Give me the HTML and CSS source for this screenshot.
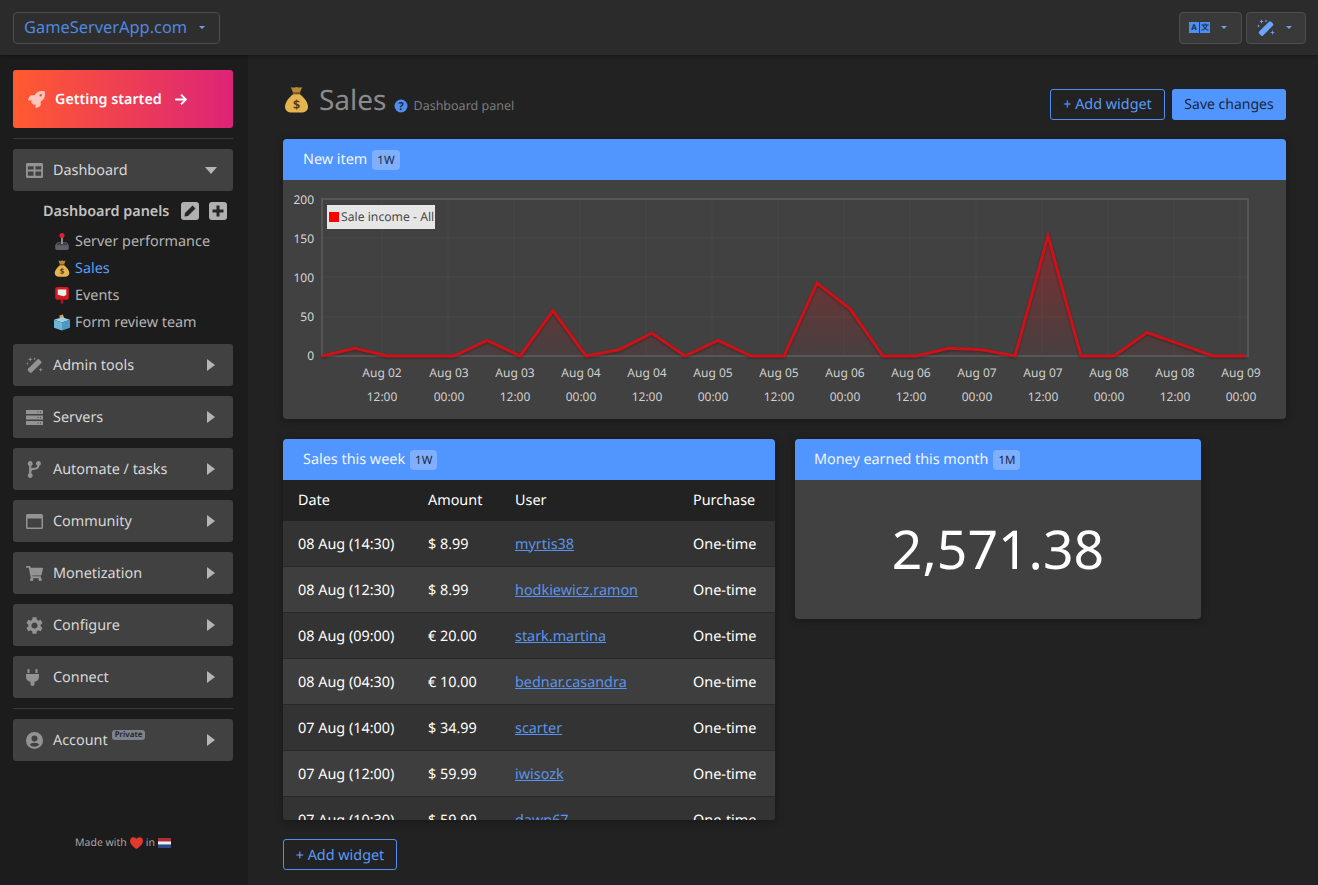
FILE: index.html
```html
<!DOCTYPE html>
<html lang="en">
<head>
<meta charset="utf-8">
<title>Sales</title>
<link rel="stylesheet" href="styles.css">
</head>
<body>
<svg class="defs" aria-hidden="true">
  <symbol id="i-rocket" viewBox="0 0 512 512"><path d="M505.12 19.09c-1.19-5.53-6.66-11-12.21-12.19C460.72 0 435.51 0 410.41 0 307.18 0 245.27 55.2 199.05 128H94.84c-16.35.02-35.56 11.88-42.89 26.48L2.52 253.3A28.4 28.4 0 0 0 0 264a24 24 0 0 0 24 24h103.81l-22.47 22.47c-11.37 11.36-13 32.26 0 45.25l50.9 50.9c11.16 11.19 32.16 13.16 45.28 0L224 384.16V488a24 24 0 0 0 24 24 28.56 28.56 0 0 0 10.71-2.52l98.73-49.39c14.63-7.3 26.51-26.5 26.51-42.86V312.8c72.6-46.31 128.03-108.41 128.03-211.1.1-25.2.1-50.4-6.86-82.61ZM384.04 168a40 40 0 1 1 40-40 40 40 0 0 1-40 40Z"/></symbol>
  <symbol id="i-table" viewBox="0 0 18 16"><path fill-rule="evenodd" d="M1.5 0h15A1.5 1.5 0 0 1 18 1.5v13a1.5 1.5 0 0 1-1.5 1.5h-15A1.5 1.5 0 0 1 0 14.500v-13A1.500 1.500 0 0 1 1.500 0ZM2 3.500V7h6V3.500Zm8 0V7h6V3.500ZM2 9v4.500h6V9Zm8 0v4.500h6V9Z"/></symbol>
  <symbol id="i-wand" viewBox="0 0 18 18"><path d="M12 2.700a1.500 1.500 0 0 1 2.100 0l1.800 1.800a1.500 1.500 0 0 1 0 2.100l-9.800 9.800a1.500 1.500 0 0 1-2.100 0L2.200 14.600a1.500 1.500 0 0 1 0-2.100Z"/><path fill="currentColor" d="M4.500 0l.6 1.900L7 2.500l-1.900.6L4.500 5l-.6-1.900L2 2.500l1.900-.6ZM1.500 5.500l.4 1.100L3 7l-1.100.4L1.500 8.500l-.4-1.100L0 7l1.100-.4ZM15.500 11l.6 1.900 1.900.6-1.900.6-.6 1.900-.6-1.900-1.900-.6 1.900-.6ZM9 .5l.4 1.100 1.100.4-1.100.4L9 3.500l-.4-1.100L7.500 2l1.100-.4Z"/></symbol>
  <symbol id="i-servers" viewBox="0 0 17 15"><path fill-rule="evenodd" d="M0 0h17v4H0Zm11.500 1.500v1h1v-1Zm2.500 0v1h1v-1ZM0 5.500h17v4H0ZM11.500 7v1h1V7ZM14 7v1h1V7ZM0 11h17v4H0Zm11.500 1.500v1h1v-1Zm2.500 0v1h1v-1Z"/></symbol>
  <symbol id="i-branch" viewBox="0 0 12 15"><path fill-rule="evenodd" d="M2.200 0a2.200 2.200 0 0 1 1 4.150v2.300c.7-.4 1.600-.6 2.600-.6 1.800 0 2.500-.6 2.700-1.650a2.200 2.200 0 1 1 1.800.05C10.100 6.500 8.400 7.700 5.800 7.700c-1.500 0-2.400.6-2.600 1.800v1.350a2.200 2.200 0 1 1-2 0v-6.700A2.200 2.200 0 0 1 2.200 0Z"/></symbol>
  <symbol id="i-window" viewBox="0 0 17 15"><path fill-rule="evenodd" d="M1.500 0h14A1.500 1.500 0 0 1 17 1.500v12a1.500 1.500 0 0 1-1.500 1.500h-14A1.500 1.500 0 0 1 0 13.500v-12A1.500 1.500 0 0 1 1.500 0ZM1.500 4.500v9h14v-9Z"/></symbol>
  <symbol id="i-cart" viewBox="0 0 576 512"><path d="M528.120 301.319l47.273-208C578.806 78.301 567.391 64 551.990 64H159.208l-9.166-44.810C147.758 8.021 137.930 0 126.529 0H24C10.745 0 0 10.745 0 24v16c0 13.255 10.745 24 24 24h69.883l70.248 343.435C147.325 417.100 136 435.222 136 456c0 30.928 25.072 56 56 56s56-25.072 56-56c0-15.674-6.447-29.835-16.824-40h209.647C430.447 426.165 424 440.326 424 456c0 30.928 25.072 56 56 56s56-25.072 56-56c0-22.172-12.888-41.332-31.579-50.405l5.517-24.276c3.413-15.018-8.002-29.319-23.403-29.319H218.117l-6.545-32h293.145c11.206 0 20.920-7.754 23.403-18.681z"/></symbol>
  <symbol id="i-cog" viewBox="2 2 20 20"><path d="M19.140 12.940c.04-.3.06-.61.06-.94 0-.32-.02-.64-.07-.94l2.030-1.580c.18-.14.23-.41.12-.61l-1.920-3.320c-.12-.22-.37-.29-.59-.22l-2.390.96c-.5-.38-1.030-.7-1.620-.94l-.36-2.540c-.04-.24-.24-.41-.48-.41h-3.840c-.24 0-.43.17-.47.41l-.36 2.540c-.59.24-1.130.57-1.620.94l-2.390-.96c-.22-.08-.47 0-.59.22L2.740 8.870c-.12.21-.08.47.12.61l2.030 1.580c-.05.3-.09.63-.09.94s.02.64.07.94l-2.030 1.580c-.18.14-.23.41-.12.61l1.920 3.320c.12.22.37.29.59.22l2.390-.96c.5.38 1.030.7 1.620.94l.36 2.540c.05.24.24.41.48.41h3.840c.24 0 .44-.17.47-.41l.36-2.540c.59-.24 1.130-.56 1.620-.94l2.390.96c.22.08.47 0 .59-.22l1.920-3.320c.12-.22.07-.47-.12-.61l-2.010-1.580zM12 15.600c-1.980 0-3.600-1.620-3.600-3.600s1.620-3.600 3.600-3.600 3.600 1.620 3.600 3.600-1.620 3.600-3.600 3.600z"/></symbol>
  <symbol id="i-plug" viewBox="0 0 17 17"><path d="M2.500 0a1 1 0 0 1 1 1v3h-2V1a1 1 0 0 1 1-1Zm8 0a1 1 0 0 1 1 1v3h-2V1a1 1 0 0 1 1-1ZM0 5h13v2.500a5.500 5.500 0 0 1-4.500 5.300V15a2 2 0 0 1-4 0v-2.200A5.500 5.500 0 0 1 0 7.500Z"/></symbol>
  <symbol id="i-user" viewBox="0 0 17 17"><path fill-rule="evenodd" d="M8.500 0a8.500 8.500 0 1 1 0 17 8.500 8.500 0 0 1 0-17Zm0 3.400a3 3 0 1 0 0 6 3 3 0 0 0 0-6Zm0 7.400c-2.300 0-4.100.8-4.700 2a6.500 6.500 0 0 0 9.400 0c-.6-1.200-2.400-2-4.700-2Z"/></symbol>
  <symbol id="e-bag" viewBox="0 0 24 28">
    <path fill="#b98a35" d="M6 1c2 1 4 .5 6 0 2 .5 4 1 6 0l-2.500 6h-7Z"/>
    <path fill="#7e5a20" d="M8 6.500h8v2H8Z"/>
    <path fill="#e3b450" d="M8.500 8.500h7C20 12 24 17 24 21.500c0 4-3 6-7 6H7c-4 0-7-2-7-6C0 17 4 12 8.500 8.500Z"/>
    <text x="12" y="23.500" class="e-dollar" text-anchor="middle">$</text>
  </symbol>
  <symbol id="e-joy" viewBox="0 0 16 20">
    <path fill="#5c6068" d="M0 14.500 2.500 11h11l2.500 3.500V18a2 2 0 0 1-2 2H2a2 2 0 0 1-2-2Z"/>
    <path fill="#3d4047" d="M3 11.500h10l1.500 3h-13Z"/>
    <rect x="7" y="4" width="2" height="9" fill="#9a9ea6"/>
    <circle cx="8" cy="3" r="3" fill="#d8222a"/>
    <rect x="3" y="15.500" width="2.500" height="1.500" fill="#c5303c"/>
  </symbol>
  <symbol id="e-mail" viewBox="0 0 16 20">
    <rect width="16" height="15" rx="2.500" fill="#cf1d26"/>
    <rect x="6.500" y="14" width="3" height="5.500" fill="#a8151d"/>
    <path fill="#f1eeea" d="M3 3h10v6.500l-3 1.500-7-2Z"/>
  </symbol>
  <symbol id="e-box" viewBox="0 0 18 18">
    <path fill="#d9a05a" d="M6 1l4-1 2 5-5 2Z"/>
    <path fill="#9bd3ea" d="M0 6l9-3 9 3-9 3Z"/>
    <path fill="#6eb5d6" d="M0 6l9 3v9l-9-3Z"/>
    <path fill="#4d9ac2" d="M18 6l-9 3v9l9-3Z"/>
  </symbol>
  <symbol id="e-heart" viewBox="0 0 14 13"><path fill="#e03a2c" d="M7 13C2 9.500 0 7 0 4a3.800 3.800 0 0 1 7-2 3.800 3.800 0 0 1 7 2c0 3-2 5.500-7 9Z"/></symbol>
  <symbol id="e-flag" viewBox="0 0 13 10"><rect width="13" height="3.400" y="0" fill="#b3283a"/><rect width="13" height="3.300" y="3.400" fill="#eee"/><rect width="13" height="3.300" y="6.700" fill="#2a4a8a"/></symbol>
</svg>

<header class="topbar">
  <button class="drop drop-brand">GameServerApp.com<span class="caret"></span></button>
  <div class="top-actions">
    <button class="drop drop-lang">
      <span class="lang-icon"><span class="lang-a">A</span><span class="lang-b">文</span></span><span class="caret"></span>
    </button>
    <button class="drop drop-wand"><svg class="wand-icon"><use href="#i-wand"/></svg><span class="caret"></span></button>
  </div>
</header>

<div class="shell">
  <aside class="sidebar">
    <a class="start">
      <svg class="start-rocket"><use href="#i-rocket"/></svg>
      <span>Getting started</span>
      <svg class="start-arrow" viewBox="0 0 12 12"><path d="M1 6h10M6.500 1.500 11 6l-4.500 4.500"/></svg>
    </a>
    <hr class="rule">
    <div class="nav-item">
      <svg class="nav-icon"><use href="#i-table"/></svg><span class="nav-label">Dashboard</span><span class="tri-down"></span>
    </div>
    <div class="subnav">
      <div class="sub-title">
        <span>Dashboard panels</span>
        <span class="sq"><svg viewBox="0 0 12 12"><path d="M8.500 .5 11.500 3.500 4 11 .5 11.500 1 8Z"/></svg></span>
        <span class="sq"><svg viewBox="0 0 12 12"><path d="M4.500 .5h3v4h4v3h-4v4h-3v-4h-4v-3h4Z"/></svg></span>
      </div>
      <div class="sub-link"><svg class="emoji"><use href="#e-joy"/></svg>Server performance</div>
      <div class="sub-link active"><svg class="emoji"><use href="#e-bag"/></svg>Sales</div>
      <div class="sub-link"><svg class="emoji"><use href="#e-mail"/></svg>Events</div>
      <div class="sub-link"><svg class="emoji"><use href="#e-box"/></svg>Form review team</div>
    </div>
    <div class="nav-item"><svg class="nav-icon"><use href="#i-wand"/></svg><span class="nav-label">Admin tools</span><span class="tri-right"></span></div>
    <div class="nav-item"><svg class="nav-icon"><use href="#i-servers"/></svg><span class="nav-label">Servers</span><span class="tri-right"></span></div>
    <div class="nav-item"><svg class="nav-icon"><use href="#i-branch"/></svg><span class="nav-label">Automate / tasks</span><span class="tri-right"></span></div>
    <div class="nav-item"><svg class="nav-icon"><use href="#i-window"/></svg><span class="nav-label">Community</span><span class="tri-right"></span></div>
    <div class="nav-item"><svg class="nav-icon"><use href="#i-cart"/></svg><span class="nav-label">Monetization</span><span class="tri-right"></span></div>
    <div class="nav-item"><svg class="nav-icon"><use href="#i-cog"/></svg><span class="nav-label">Configure</span><span class="tri-right"></span></div>
    <div class="nav-item"><svg class="nav-icon"><use href="#i-plug"/></svg><span class="nav-label">Connect</span><span class="tri-right"></span></div>
    <hr class="rule rule-low">
    <div class="nav-item"><svg class="nav-icon"><use href="#i-user"/></svg><span class="nav-label">Account<sup class="private">Private</sup></span><span class="tri-right"></span></div>
    <div class="made">Made with <svg class="mini"><use href="#e-heart"/></svg> in <svg class="mini"><use href="#e-flag"/></svg></div>
  </aside>

  <main class="main">
    <div class="page-head">
      <div class="page-title">
        <svg class="title-emoji"><use href="#e-bag"/></svg>
        <h1>Sales</h1>
        <svg class="help" viewBox="0 0 14 14"><circle cx="7" cy="7" r="6.500"/><text x="7" y="11" text-anchor="middle">?</text></svg>
        <span class="page-sub">Dashboard panel</span>
      </div>
      <div class="page-actions">
        <button class="btn-outline">+ Add widget</button>
        <button class="btn-solid">Save changes</button>
      </div>
    </div>

    <section class="card">
      <div class="card-head">New item <span class="tag">1W</span></div>
      <svg class="chart" viewBox="0 0 1003 239">
        <defs>
          <linearGradient id="fade" gradientUnits="userSpaceOnUse" x1="0" y1="19" x2="0" y2="176">
            <stop offset="0" stop-color="#e01018" stop-opacity=".5"/>
            <stop offset="1" stop-color="#e01018" stop-opacity=".04"/>
          </linearGradient>
        </defs>
        <g class="grid">
          <path d="M39 58H965M39 97H965M39 137H965M99 19V176M165 19V176M231 19V176M297 19V176M363 19V176M429 19V176M495 19V176M561 19V176M627 19V176M693 19V176M759 19V176M825 19V176M891 19V176M957 19V176"/>
        </g>
        <rect class="frame" x="39" y="19" width="926" height="157"/>
        <path class="area" d="M39 176 72 168.200 105 176 138 176 171 176 204 160.300 237 176 270 130.500 303 176 336 169.700 369 153.200 402 176 435 160.300 468 176 501 176 534 103 567 128.900 600 176 633 176 666 168.200 699 169.700 732 176 765 55.900 798 176 831 176 864 152.500 897 164.200 930 176 963 176Z"/>
        <path class="line" d="M39 176 72 168.200 105 176 138 176 171 176 204 160.300 237 176 270 130.500 303 176 336 169.700 369 153.200 402 176 435 160.300 468 176 501 176 534 103 567 128.900 600 176 633 176 666 168.200 699 169.700 732 176 765 55.900 798 176 831 176 864 152.500 897 164.200 930 176 963 176"/>
        <g class="y-ticks">
          <text x="31" y="24">200</text><text x="31" y="63">150</text><text x="31" y="102">100</text><text x="31" y="141">50</text><text x="31" y="180">0</text>
        </g>
        <g class="x-ticks">
          <text x="99" y="197">Aug 02</text><text x="99" y="221">12:00</text>
          <text x="166" y="197">Aug 03</text><text x="166" y="221">00:00</text>
          <text x="232" y="197">Aug 03</text><text x="232" y="221">12:00</text>
          <text x="298" y="197">Aug 04</text><text x="298" y="221">00:00</text>
          <text x="364" y="197">Aug 04</text><text x="364" y="221">12:00</text>
          <text x="430" y="197">Aug 05</text><text x="430" y="221">00:00</text>
          <text x="496" y="197">Aug 05</text><text x="496" y="221">12:00</text>
          <text x="562" y="197">Aug 06</text><text x="562" y="221">00:00</text>
          <text x="628" y="197">Aug 06</text><text x="628" y="221">12:00</text>
          <text x="694" y="197">Aug 07</text><text x="694" y="221">00:00</text>
          <text x="760" y="197">Aug 07</text><text x="760" y="221">12:00</text>
          <text x="826" y="197">Aug 08</text><text x="826" y="221">00:00</text>
          <text x="892" y="197">Aug 08</text><text x="892" y="221">12:00</text>
          <text x="958" y="197">Aug 09</text><text x="958" y="221">00:00</text>
        </g>
        <rect class="legend-bg" x="44" y="25" width="108" height="24"/>
        <rect class="legend-swatch" x="46" y="32" width="10" height="10"/>
        <text class="legend-text" x="58" y="41">Sale income - All</text>
      </svg>
    </section>

    <div class="row">
      <section class="card card-table">
        <div class="card-head">Sales this week <span class="tag">1W</span></div>
        <div class="table-clip">
          <table>
            <colgroup><col class="c1"><col class="c2"><col class="c3"><col class="c4"></colgroup>
            <thead><tr><th>Date</th><th>Amount</th><th>User</th><th>Purchase</th></tr></thead>
            <tbody>
              <tr><td>08 Aug (14:30)</td><td>$ 8.99</td><td><a href="#">myrtis38</a></td><td>One-time</td></tr>
              <tr><td>08 Aug (12:30)</td><td>$ 8.99</td><td><a href="#">hodkiewicz.ramon</a></td><td>One-time</td></tr>
              <tr><td>08 Aug (09:00)</td><td>€ 20.00</td><td><a href="#">stark.martina</a></td><td>One-time</td></tr>
              <tr><td>08 Aug (04:30)</td><td>€ 10.00</td><td><a href="#">bednar.casandra</a></td><td>One-time</td></tr>
              <tr><td>07 Aug (14:00)</td><td>$ 34.99</td><td><a href="#">scarter</a></td><td>One-time</td></tr>
              <tr><td>07 Aug (12:00)</td><td>$ 59.99</td><td><a href="#">iwisozk</a></td><td>One-time</td></tr>
              <tr><td>07 Aug (10:30)</td><td>$ 59.99</td><td><a href="#">dawn67</a></td><td>One-time</td></tr>
            </tbody>
          </table>
        </div>
      </section>
      <section class="card card-stat">
        <div class="card-head card-head-tight">Money earned this month <span class="tag">1M</span></div>
        <div class="stat">2,571.38</div>
      </section>
    </div>

    <button class="btn-outline btn-bottom">+ Add widget</button>
  </main>
</div>
</body>
</html>
```
FILE: styles.css
```css
* { box-sizing: border-box; }
html, body { height: 100%; }
body {
  margin: 0;
  height: 885px;
  overflow: hidden;
  background: #222;
  color: #fff;
  font-family: "Noto Sans", "Open Sans", sans-serif;
  font-size: 14.400px;
  text-rendering: geometricPrecision;
}
.defs { position: absolute; width: 0; height: 0; }
.e-dollar { font: 700 13px "Noto Sans", sans-serif; fill: #5a3d10; }

.topbar {
  height: 55px;
  background: #2b2b2b;
  display: flex;
  align-items: center;
  justify-content: space-between;
  padding: 0 12px 0 13px;
  box-shadow: 0 1px 4px rgba(0,0,0,.35);
  position: relative;
}
.drop {
  height: 32px;
  display: inline-flex;
  align-items: center;
  background: #333;
  border: 1px solid #4e4e4e;
  border-radius: 4px;
  font-family: inherit;
  text-rendering: geometricPrecision;
  padding: 0;
  color: #4f8ef0;
}
.drop-brand { width: 207px; padding: 0 0 2px 10px; font-size: 16.400px; color: #4f88e0; background: #2e2e2e; }
.caret {
  width: 0; height: 0;
  border-left: 3px solid transparent;
  border-right: 3px solid transparent;
  border-top: 3px solid #6f9fe8;
}
.drop-brand .caret { margin-left: 12px; margin-top: 2px; }
.top-actions { display: flex; gap: 4px; }
.drop-lang { width: 63px; padding-left: 9px; background: #393939; }
.drop-lang .caret { margin-left: 11px; }
.drop-wand { width: 60px; padding-left: 10px; background: #393939; }
.drop-wand .caret { margin-left: 11px; }
.lang-icon { display: flex; width: 21px; height: 11px; justify-content: space-between; }
.lang-a, .lang-b {
  width: 10px; height: 11px;
  background: #4f8ef0;
  color: #22324c;
  font: 700 8px/11px "Noto Sans", "Noto Sans CJK SC", sans-serif;
  text-align: center;
}
.wand-icon { width: 18px; height: 18px; fill: #6aa5ff; color: #6aa5ff; }

.shell { display: flex; height: 830px; }
.sidebar {
  width: 248px;
  flex: none;
  background: #1c1c1c;
  padding: 15px 15px 0 13px;
}
.start {
  height: 58px;
  display: flex;
  align-items: center;
  padding: 0 0 0 15px;
  border-radius: 3px;
  background: linear-gradient(90deg, #ff5a30, #dc2478);
  font-weight: 600;
  font-size: 14.300px;
  color: #fff;
}
.start-rocket { width: 17px; height: 17px; fill: #ffc4bc; margin-right: 10px; }
.start-arrow { width: 13px; height: 13px; margin-left: 12px; fill: none; stroke: #fff; stroke-width: 1.800; }
.rule { margin: 10px 0; border: 0; border-top: 1px solid #3a3a3a; height: 0; }
.rule-low { margin: 10px 0 10px; }
.nav-item {
  height: 42px;
  display: flex;
  align-items: center;
  padding: 0 16px 0 13px;
  margin-bottom: 10px;
  background: #414141;
  border-radius: 3px;
  color: #d8d8d8;
}
.nav-item:last-of-type { margin-bottom: 0; }
.nav-icon { width: 17px; height: 17px; fill: #939393; color: #939393; flex: none; margin-right: 10px; }
.nav-label { flex: 1; position: relative; }
.tri-down {
  width: 0; height: 0;
  border-left: 6px solid transparent;
  border-right: 6px solid transparent;
  border-top: 7px solid #b5b5b5;
  margin-right: 0;
}
.tri-right {
  width: 0; height: 0;
  border-top: 6px solid transparent;
  border-bottom: 6px solid transparent;
  border-left: 8px solid #b5b5b5;
  margin-right: 2px;
}
.private {
  display: inline-block;
  vertical-align: 8px;
  margin-left: 4px;
  padding: 0 3px;
  height: 10px;
  line-height: 10px;
  font-size: 8px;
  font-weight: 600;
  border-radius: 3px;
  background: #7d838d;
  color: #1d2128;
}
.subnav { height: 153px; margin-top: -10px; padding: 8px 0 0 30px; color: #b4b4b4; }
.sub-title {
  height: 24px;
  display: flex;
  align-items: center;
  font-weight: 600;
  font-size: 14.400px;
  color: #c2c2c2;
  margin-bottom: 4.400px;
}
.sq {
  width: 18px; height: 18px;
  border-radius: 3px;
  background: #b0b0b0;
  display: flex;
  align-items: center;
  justify-content: center;
}
.sq { margin-left: 12px; }
.sq + .sq { margin-left: 10px; }
.sq svg { width: 12px; height: 12px; fill: #262626; }
.sub-link {
  height: 27.300px;
  display: flex;
  align-items: center;
  margin-left: 11px;
}
.sub-link.active { color: #5b9bf8; }
.emoji { width: 16px; height: 17px; margin-right: 5px; flex: none; }
.made {
  margin-top: 75px;
  text-align: center;
  font-size: 10.500px;
  color: #a5a5a5;
  display: flex;
  justify-content: center;
  align-items: center;
  gap: 3px;
}
.mini { width: 13px; height: 12px; }

.main { flex: 1; padding: 0 32px 0 35px; min-width: 0; }
.page-head {
  height: 84px;
  display: flex;
  align-items: flex-end;
  justify-content: space-between;
  padding-bottom: 19px;
}
.page-title { display: flex; align-items: center; }
.title-emoji { width: 23px; height: 27px; margin: 0 11px 0 2px; }
h1 { margin: 0; padding-top: 1px; font-size: 28px; font-weight: 400; line-height: 40px; color: #8b8b8b; }
.help { width: 14px; height: 14px; margin: 12px 6px 0 7px; fill: #4f8ef0; }
.help text { font: 700 11px "Noto Sans", sans-serif; fill: #1d2b44; }
.page-sub { font-size: 12.500px; color: #7b7b7b; margin-top: 12px; }
.page-actions { display: flex; gap: 7px; }
button { cursor: pointer; }
.btn-outline {
  width: 115px;
  height: 31px;
  border: 1px solid #4f8ef0;
  border-radius: 3px;
  background: transparent;
  color: #5b9bf8;
  font: 14.400px "Noto Sans", sans-serif;
  text-rendering: geometricPrecision;
  padding: 0;
}
.btn-solid {
  width: 114px;
  height: 31px;
  border: 0;
  border-radius: 3px;
  background: #5196ff;
  color: #1a2638;
  font: 14px "Noto Sans", sans-serif;
  text-rendering: geometricPrecision;
  padding: 0;
}
.btn-bottom { width: 114px; display: block; margin-top: 19px; padding-top: 2px; }

.card {
  background: #414141;
  border-radius: 4px;
  overflow: hidden;
  box-shadow: 0 2px 8px rgba(0,0,0,.3);
}
.card-head {
  height: 41px;
  padding: 0 0 0 20px;
  display: flex;
  align-items: center;
  background: #5196ff;
  color: #eef4ff;
  font-size: 14.400px;
}
.card-head-tight { padding-left: 19px; letter-spacing: -.02px; }
.tag {
  height: 20px;
  margin: 1px 0 0 5px;
  padding: 0 5px;
  border-radius: 4px;
  background: #7eb0ff;
  color: #1c2a40;
  font-size: 11.500px;
  line-height: 21px;
}
.chart { display: block; width: 1003px; height: 239px; }
.grid path { fill: none; stroke: #484848; stroke-width: 1; }
.frame { fill: none; stroke: #565656; stroke-width: 2; }
.area { fill: url(#fade); }
.line { fill: none; stroke: #cc1118; stroke-width: 3; stroke-linejoin: miter; filter: drop-shadow(0 1px 1px rgba(0,0,0,.3)); }
.y-ticks text { font-size: 12px; fill: #d6d6d6; text-anchor: end; }
.x-ticks text { font-size: 12px; fill: #d0d0d0; text-anchor: middle; }
.legend-bg { fill: #e6e6e6; }
.legend-swatch { fill: #f00; }
.legend-text { font-size: 12.200px; fill: #4a4a4a; }

.row { display: flex; align-items: flex-start; gap: 20px; margin-top: 20px; }
.card-table { width: 492px; background: #333; }
.table-clip { height: 340px; overflow: hidden; }
table { width: 100%; border-collapse: separate; border-spacing: 0; table-layout: fixed; font-size: 14.400px; }
.c1 { width: 130px; }
.c2 { width: 87px; }
.c3 { width: 178px; }
.c4 { width: 97px; }
th {
  height: 41px;
  background: #222;
  font-weight: 400;
  text-align: left;
  padding: 0 0 1px 15px;
}
td { height: 46px; padding: 1px 0 0 15px; border-bottom: 1px solid #282828; }
tbody tr:nth-child(odd) td { background: #333; }
tbody tr:nth-child(even) td { background: #3e3e3e; }
td a { color: #5a93ec; text-decoration: underline; }
.card-stat { width: 406px; }
.stat {
  height: 139px;
  padding-bottom: 2px;
  display: flex;
  align-items: center;
  justify-content: center;
  font-size: 53.500px;
  color: #fff;
}
```
